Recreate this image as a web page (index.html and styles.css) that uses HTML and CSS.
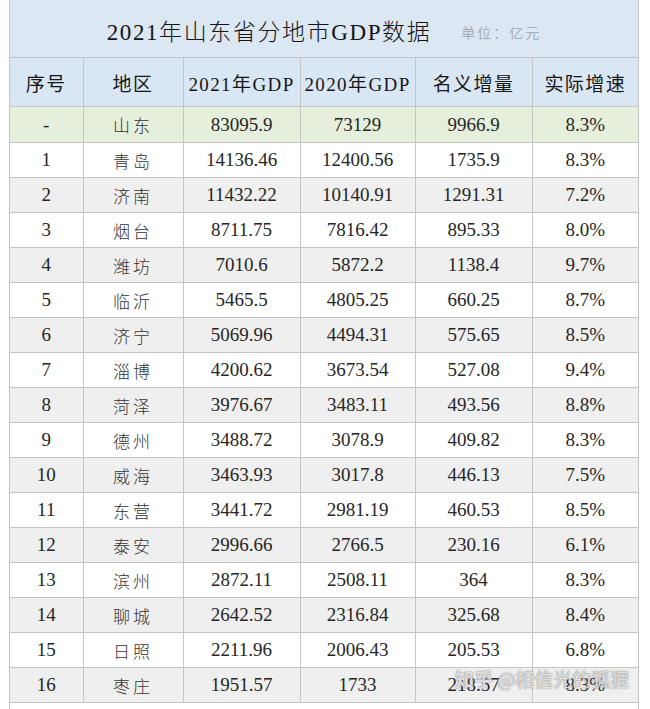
FILE: index.html
```html
<!DOCTYPE html>
<html lang="zh-CN">
<head>
<meta charset="utf-8">
<title>2021年山东省分地市GDP数据</title>
<link rel="stylesheet" href="styles.css">
</head>
<body>
<div class="sheet">
  <div class="title"><span class="title-main">2021年山东省分地市GDP数据</span><span class="unit">单位：亿元</span></div>
  <table class="gdp">
    <colgroup>
      <col class="c1"><col class="c2"><col class="c3"><col class="c4"><col class="c5"><col class="c6">
    </colgroup>
    <thead>
      <tr><th>序号</th><th>地区</th><th>2021年GDP</th><th>2020年GDP</th><th>名义增量</th><th>实际增速</th></tr>
    </thead>
    <tbody>
      <tr class="total"><td>-</td><td class="cn">山东</td><td>83095.9</td><td>73129</td><td>9966.9</td><td>8.3%</td></tr>
      <tr><td>1</td><td class="cn">青岛</td><td>14136.46</td><td>12400.56</td><td>1735.9</td><td>8.3%</td></tr>
      <tr><td>2</td><td class="cn">济南</td><td>11432.22</td><td>10140.91</td><td>1291.31</td><td>7.2%</td></tr>
      <tr><td>3</td><td class="cn">烟台</td><td>8711.75</td><td>7816.42</td><td>895.33</td><td>8.0%</td></tr>
      <tr><td>4</td><td class="cn">潍坊</td><td>7010.6</td><td>5872.2</td><td>1138.4</td><td>9.7%</td></tr>
      <tr><td>5</td><td class="cn">临沂</td><td>5465.5</td><td>4805.25</td><td>660.25</td><td>8.7%</td></tr>
      <tr><td>6</td><td class="cn">济宁</td><td>5069.96</td><td>4494.31</td><td>575.65</td><td>8.5%</td></tr>
      <tr><td>7</td><td class="cn">淄博</td><td>4200.62</td><td>3673.54</td><td>527.08</td><td>9.4%</td></tr>
      <tr><td>8</td><td class="cn">菏泽</td><td>3976.67</td><td>3483.11</td><td>493.56</td><td>8.8%</td></tr>
      <tr><td>9</td><td class="cn">德州</td><td>3488.72</td><td>3078.9</td><td>409.82</td><td>8.3%</td></tr>
      <tr><td>10</td><td class="cn">威海</td><td>3463.93</td><td>3017.8</td><td>446.13</td><td>7.5%</td></tr>
      <tr><td>11</td><td class="cn">东营</td><td>3441.72</td><td>2981.19</td><td>460.53</td><td>8.5%</td></tr>
      <tr><td>12</td><td class="cn">泰安</td><td>2996.66</td><td>2766.5</td><td>230.16</td><td>6.1%</td></tr>
      <tr><td>13</td><td class="cn">滨州</td><td>2872.11</td><td>2508.11</td><td>364</td><td>8.3%</td></tr>
      <tr><td>14</td><td class="cn">聊城</td><td>2642.52</td><td>2316.84</td><td>325.68</td><td>8.4%</td></tr>
      <tr><td>15</td><td class="cn">日照</td><td>2211.96</td><td>2006.43</td><td>205.53</td><td>6.8%</td></tr>
      <tr><td>16</td><td class="cn">枣庄</td><td>1951.57</td><td>1733</td><td>218.57</td><td>8.3%</td></tr>
    </tbody>
  </table>
  <div class="tail"></div>
</div>
<div class="watermark"><span class="wm-brand">知乎</span> @相信光的狐狸</div>
</body>
</html>
```

FILE: styles.css
```css
html, body {
  margin: 0;
  padding: 0;
  background: #ffffff;
}

body {
  height: 709px;
  overflow: hidden;
  position: relative;
  font-family: "Liberation Serif", "Noto Sans CJK SC", serif;
  color: #1e1e1e;
}

.sheet {
  margin-left: 9px;
  width: 630px;
  height: 709px;
  display: flex;
  flex-direction: column;
  border-left: 1px solid #c4c4c4;
  border-right: 1px solid #c4c4c4;
  box-sizing: border-box;
}

.title {
  height: 57px;
  background: #dbe7f3;
  display: flex;
  align-items: center;
  justify-content: center;
  gap: 30px;
  padding-top: 2px;
  box-sizing: border-box;
}

.title-main {
  font-size: 23px;
  letter-spacing: 1.6px;
  color: #141414;
  font-weight: 300;
}

.unit {
  font-family: "Noto Sans CJK SC", sans-serif;
  font-size: 14px;
  letter-spacing: 2px;
  color: #a8adb3;
  padding-top: 4px;
}

.gdp {
  width: 100%;
  border-collapse: collapse;
  table-layout: fixed;
}

.c1 { width: 73px; }
.c2 { width: 100px; }
.c3 { width: 117px; }
.c4 { width: 115px; }
.c5 { width: 117px; }
.c6 { width: 106px; }

.gdp th,
.gdp td {
  border: 1px solid #c4c4c4;
  text-align: center;
  padding: 0;
  font-weight: normal;
}

.gdp tr > :first-child { border-left: none; }
.gdp tr > :last-child { border-right: none; }

.gdp th {
  height: 48px;
  background: #d9e6f3;
  font-size: 19px;
  letter-spacing: 1.4px;
  color: #161616;
}

.gdp td {
  height: 34px;
  font-size: 19px;
  color: #262626;
}

.gdp td.cn {
  font-family: "Noto Sans CJK SC", sans-serif;
  font-size: 17px;
  letter-spacing: 3px;
  font-weight: 300;
  color: #333333;
}

.gdp tr.total td {
  height: 35px;
  background: #e5efdb;
}

.gdp tbody tr:nth-child(odd):not(.total) td {
  background: #efefef;
}

.tail {
  flex: 1;
}

.watermark {
  position: absolute;
  left: 455px;
  top: 665px;
  font-family: "Noto Sans CJK SC", sans-serif;
  font-size: 19px;
  color: rgba(255, 255, 255, 0.75);
  text-shadow: 0 0 1px rgba(110, 110, 110, 0.9), 0 0 2px rgba(120, 120, 120, 0.6);
  white-space: nowrap;
}

.wm-brand {
  font-weight: bold;
}
```
